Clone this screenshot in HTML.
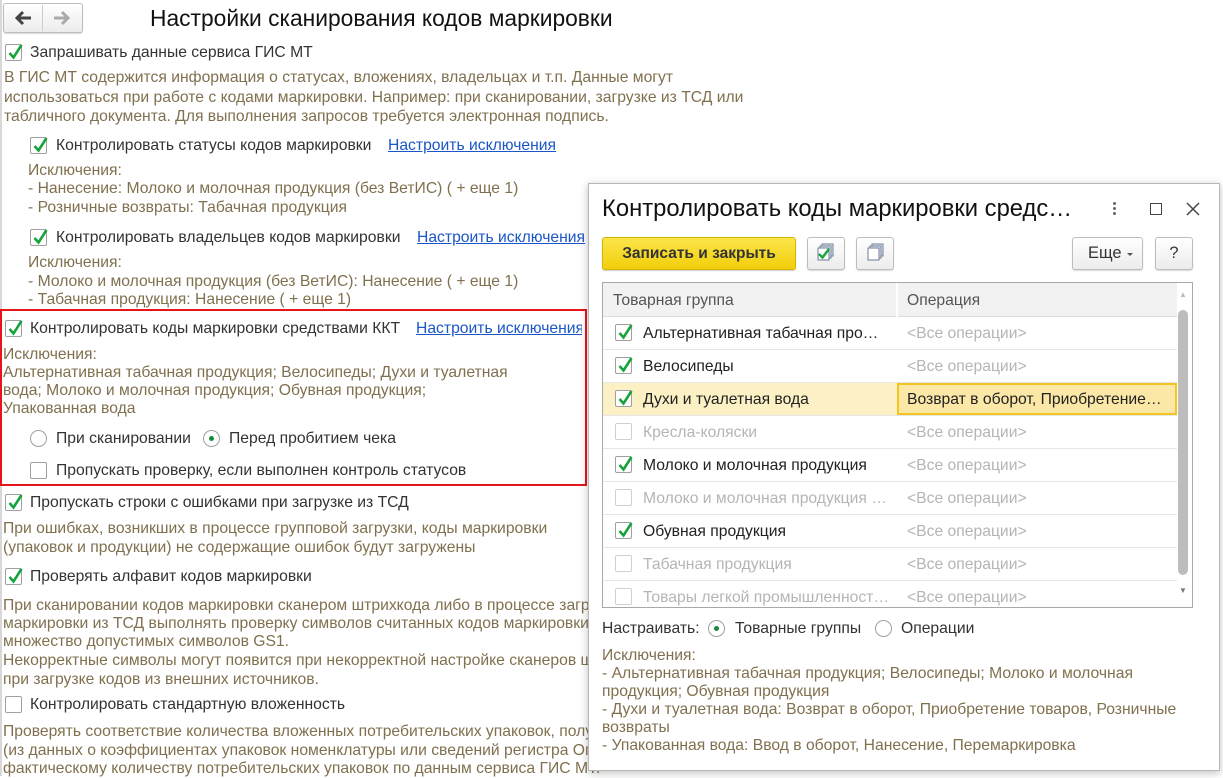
<!DOCTYPE html>
<html><head><meta charset="utf-8"><style>
*{margin:0;padding:0;box-sizing:border-box}
body{width:1223px;height:776px;background:#fff;font-family:"Liberation Sans",Arial,sans-serif;font-size:15.7px;color:#333;position:relative;overflow:hidden;letter-spacing:0}
.t{position:absolute;white-space:nowrap;line-height:19px}
.d{color:#80704f}
.a{color:#1a56c8;text-decoration:underline}
.cb{position:absolute;width:17px;height:17px;border:1px solid #a0a0a0;border-radius:2px;background:#fff}
.cb.g{border-color:#d0d0d0}
.cb svg{position:absolute;left:0;top:-3px}
.rb{position:absolute;width:17px;height:17px;border:1px solid #a0a0a0;border-radius:50%;background:#fff}
.rb.on::after{content:"";position:absolute;left:5px;top:5px;width:5px;height:5px;border-radius:50%;background:#1a8a3a}
.btn{position:absolute;border:1px solid #bdbdbd;border-radius:3px;background:linear-gradient(#fff,#ececec);box-shadow:0 1px 1px rgba(0,0,0,.15)}
</style></head><body>
<svg width="0" height="0" style="position:absolute"><defs><symbol id="ck" viewBox="0 0 18 20"><path d="M3.5 11 L7.5 15.5 L15.5 3" fill="none" stroke="#17a33c" stroke-width="2.6"/></symbol></defs></svg>

<div style="position:absolute;left:0;top:0;width:2px;height:776px;background:#d8d8d8"></div>
<!-- nav -->
<div class="btn" style="left:3px;top:3px;width:80px;height:30px"></div>
<div style="position:absolute;left:42px;top:5px;width:1px;height:26px;background:#ccc"></div>
<svg style="position:absolute;left:14px;top:10px" width="18" height="16" viewBox="0 0 18 16"><path d="M17 8 H4 M9 2 L3 8 L9 14" fill="none" stroke="#444" stroke-width="3"/></svg>
<svg style="position:absolute;left:53px;top:10px" width="18" height="16" viewBox="0 0 18 16"><path d="M1 8 H14 M9 2 L15 8 L9 14" fill="none" stroke="#aaa" stroke-width="3"/></svg>
<div class="t" style="left:150px;top:5px;font-size:22.8px;line-height:26px;color:#111">Настройки сканирования кодов маркировки</div>

<div class="cb" style="left:5px;top:44px"><svg width="18" height="20"><use href="#ck"/></svg></div>
<div class="t" style="left:30px;top:43px">Запрашивать данные сервиса ГИС МТ</div>
<div class="t d" style="left:4px;top:68px">В ГИС МТ содержится информация о статусах, вложениях, владельцах и т.п. Данные могут</div>
<div class="t d" style="left:4px;top:88px">использоваться при работе с кодами маркировки. Например: при сканировании, загрузке из ТСД или</div>
<div class="t d" style="left:4px;top:107px">табличного документа. Для выполнения запросов требуется электронная подпись.</div>

<div class="cb" style="left:30px;top:137px"><svg width="18" height="20"><use href="#ck"/></svg></div>
<div class="t" style="left:56px;top:136px">Контролировать статусы кодов маркировки</div>
<div class="t a" style="left:388px;top:136px">Настроить исключения</div>
<div class="t d" style="left:28px;top:161px">Исключения:</div>
<div class="t d" style="left:28px;top:179px">- Нанесение: Молоко и молочная продукция (без ВетИС) ( + еще 1)</div>
<div class="t d" style="left:28px;top:198px">- Розничные возвраты: Табачная продукция</div>

<div class="cb" style="left:30px;top:229px"><svg width="18" height="20"><use href="#ck"/></svg></div>
<div class="t" style="left:56px;top:228px">Контролировать владельцев кодов маркировки</div>
<div class="t a" style="left:417px;top:228px">Настроить исключения</div>
<div class="t d" style="left:28px;top:253px">Исключения:</div>
<div class="t d" style="left:28px;top:272px">- Молоко и молочная продукция (без ВетИС): Нанесение ( + еще 1)</div>
<div class="t d" style="left:28px;top:290px">- Табачная продукция: Нанесение ( + еще 1)</div>

<div style="position:absolute;left:0;top:309px;width:587px;height:177px;border:2px solid #e8141b"></div>
<div class="cb" style="left:5px;top:320px"><svg width="18" height="20"><use href="#ck"/></svg></div>
<div class="t" style="left:30px;top:319px">Контролировать коды маркировки средствами ККТ</div>
<div class="t a" style="left:416px;top:319px;width:166px;overflow:hidden">Настроить исключения</div>
<div class="t d" style="left:3px;top:345px">Исключения:</div>
<div class="t d" style="left:3px;top:363px">Альтернативная табачная продукция; Велосипеды; Духи и туалетная</div>
<div class="t d" style="left:3px;top:381px">вода; Молоко и молочная продукция; Обувная продукция;</div>
<div class="t d" style="left:3px;top:399px">Упакованная вода</div>
<div class="rb" style="left:30px;top:430px"></div>
<div class="t" style="left:56px;top:429px">При сканировании</div>
<div class="rb on" style="left:203px;top:430px"></div>
<div class="t" style="left:229px;top:429px">Перед пробитием чека</div>
<div class="cb" style="left:30px;top:462px"></div>
<div class="t" style="left:56px;top:461px">Пропускать проверку, если выполнен контроль статусов</div>

<div class="cb" style="left:5px;top:494px"><svg width="18" height="20"><use href="#ck"/></svg></div>
<div class="t" style="left:30px;top:493px">Пропускать строки с ошибками при загрузке из ТСД</div>
<div class="t d" style="left:3px;top:519px">При ошибках, возникших в процессе групповой загрузки, коды маркировки</div>
<div class="t d" style="left:3px;top:538px">(упаковок и продукции) не содержащие ошибок будут загружены</div>
<div class="cb" style="left:5px;top:568px"><svg width="18" height="20"><use href="#ck"/></svg></div>
<div class="t" style="left:30px;top:567px">Проверять алфавит кодов маркировки</div>
<div class="t d" style="left:3px;top:596px">При сканировании кодов маркировки сканером штрихкода либо в процессе загрузки кодов</div>
<div class="t d" style="left:3px;top:614px">маркировки из ТСД выполнять проверку символов считанных кодов маркировки на</div>
<div class="t d" style="left:3px;top:632px">множество допустимых символов GS1.</div>
<div class="t d" style="left:3px;top:651px">Некорректные символы могут появится при некорректной настройке сканеров штрихкода или</div>
<div class="t d" style="left:3px;top:670px">при загрузке кодов из внешних источников.</div>
<div class="cb" style="left:5px;top:696px"></div>
<div class="t" style="left:30px;top:695px">Контролировать стандартную вложенность</div>
<div class="t d" style="left:3px;top:722px">Проверять соответствие количества вложенных потребительских упаковок, полученных</div>
<div class="t d" style="left:3px;top:741px">(из данных о коэффициентах упаковок номенклатуры или сведений регистра Описание</div>
<div class="t d" style="left:3px;top:759px">фактическому количеству потребительских упаковок по данным сервиса ГИС МТ.</div>

<!-- dialog -->
<div style="position:absolute;left:588px;top:183px;width:632px;height:588px;background:#fff;border:1px solid #b8b8b8;box-shadow:0 2px 8px rgba(0,0,0,.25);overflow:hidden">
 <div class="t" style="left:13px;top:12px;font-size:23.8px;line-height:26px;color:#111">Контролировать коды маркировки средс…</div>
 <div style="position:absolute;left:524px;top:18px;width:3px;height:3px;background:#666;border-radius:50%;box-shadow:0 5px 0 #666,0 10px 0 #666"></div>
 <div style="position:absolute;left:561px;top:19px;width:12px;height:12px;border:1.5px solid #444"></div>
 <svg style="position:absolute;left:597px;top:18px" width="14" height="14" viewBox="0 0 14 14"><path d="M1 1 L13 13 M13 1 L1 13" stroke="#444" stroke-width="1.5"/></svg>

 <div style="position:absolute;left:13px;top:53px;width:194px;height:33px;border:1px solid #d6b400;border-radius:3px;background:linear-gradient(#fbe54a,#f2cf0a);box-shadow:0 1px 1px rgba(0,0,0,.2)"></div>
 <div class="t" style="left:13px;top:60px;width:194px;text-align:center;font-weight:bold;color:#333;font-size:15.5px">Записать и закрыть</div>
 <div class="btn" style="left:218px;top:53px;width:38px;height:33px"><svg width="36" height="31" viewBox="0 0 36 31"><rect x="14" y="6" width="11" height="12" fill="#e6ebf2" stroke="#6a7c95"/><rect x="12" y="8" width="11" height="12" fill="#e6ebf2" stroke="#6a7c95"/><rect x="10" y="10" width="11" height="12" fill="#fff" stroke="#6a7c95"/><path d="M11 16 L14.5 19.5 L21 11" fill="none" stroke="#1aa83a" stroke-width="2.5"/></svg></div>
 <div class="btn" style="left:267px;top:53px;width:38px;height:33px"><svg width="36" height="31" viewBox="0 0 36 31"><rect x="15" y="6" width="11" height="12" fill="#e6ebf2" stroke="#6a7c95"/><rect x="13" y="8" width="11" height="12" fill="#e6ebf2" stroke="#6a7c95"/><rect x="11" y="10" width="11" height="12" fill="#fff" stroke="#6a7c95"/></svg></div>
 <div class="btn" style="left:483px;top:53px;width:71px;height:33px"></div>
 <div class="t" style="left:499px;top:60px;color:#333;font-size:16.5px">Еще</div>
 <div style="position:absolute;left:538px;top:69px;border:3px solid transparent;border-top:3px solid #555"></div>
 <div class="btn" style="left:566px;top:53px;width:38px;height:33px"></div>
 <div class="t" style="left:566px;top:60px;width:38px;text-align:center;color:#333;font-size:16.5px">?</div>

 <div style="position:absolute;left:13px;top:98px;width:591px;height:326px;border:1px solid #a8a8a8;overflow:hidden">
  <div style="position:absolute;left:0;top:0;width:574px;height:34px;background:#f2f2f2;border-bottom:1px solid #ddd"></div>
  <div style="position:absolute;left:293px;top:0;width:2px;height:34px;background:#fff"></div>
  <div class="t" style="left:10px;top:8px;color:#555">Товарная группа</div>
  <div class="t" style="left:304px;top:8px;color:#555">Операция</div>
  <div style="position:absolute;left:575px;top:27px;width:10px;height:265px;background:#bdbdbd;border-radius:5px"></div>
  <div class="t" style="left:576px;top:2px;font-size:8px;color:#bbb">▲</div>
  <div class="t" style="left:576px;top:298px;font-size:8px;color:#777">▼</div>
  <div style="position:absolute;left:0;top:34px;width:574px">
   <div style="position:relative;height:33px;border-bottom:1px solid #e6e6e6"><div class="cb" style="left:12px;top:7px"><svg width="18" height="20"><use href="#ck"/></svg></div><div class="t" style="left:40px;top:7px;color:#222">Альтернативная табачная про…</div><div class="t" style="left:304px;top:7px;color:#b5b5b5">&lt;Все операции&gt;</div></div>
   <div style="position:relative;height:33px;border-bottom:1px solid #e6e6e6"><div class="cb" style="left:12px;top:7px"><svg width="18" height="20"><use href="#ck"/></svg></div><div class="t" style="left:40px;top:7px;color:#222">Велосипеды</div><div class="t" style="left:304px;top:7px;color:#b5b5b5">&lt;Все операции&gt;</div></div>
   <div style="position:relative;height:33px;border-bottom:1px solid #e6e6e6;background:#fcf1c5"><div class="cb" style="left:12px;top:7px"><svg width="18" height="20"><use href="#ck"/></svg></div><div class="t" style="left:40px;top:7px;color:#222">Духи и туалетная вода</div><div style="position:absolute;left:294px;top:0;width:280px;height:32px;border:2px solid #f3c521;background:#fbe8a6"></div><div class="t" style="left:304px;top:7px;color:#222;width:265px;overflow:hidden">Возврат в оборот, Приобретение…</div></div>
   <div style="position:relative;height:33px;border-bottom:1px solid #e6e6e6"><div class="cb g" style="left:12px;top:7px"></div><div class="t" style="left:40px;top:7px;color:#b5b5b5">Кресла-коляски</div><div class="t" style="left:304px;top:7px;color:#b5b5b5">&lt;Все операции&gt;</div></div>
   <div style="position:relative;height:33px;border-bottom:1px solid #e6e6e6"><div class="cb" style="left:12px;top:7px"><svg width="18" height="20"><use href="#ck"/></svg></div><div class="t" style="left:40px;top:7px;color:#222">Молоко и молочная продукция</div><div class="t" style="left:304px;top:7px;color:#b5b5b5">&lt;Все операции&gt;</div></div>
   <div style="position:relative;height:33px;border-bottom:1px solid #e6e6e6"><div class="cb g" style="left:12px;top:7px"></div><div class="t" style="left:40px;top:7px;color:#b5b5b5">Молоко и молочная продукция …</div><div class="t" style="left:304px;top:7px;color:#b5b5b5">&lt;Все операции&gt;</div></div>
   <div style="position:relative;height:33px;border-bottom:1px solid #e6e6e6"><div class="cb" style="left:12px;top:7px"><svg width="18" height="20"><use href="#ck"/></svg></div><div class="t" style="left:40px;top:7px;color:#222">Обувная продукция</div><div class="t" style="left:304px;top:7px;color:#b5b5b5">&lt;Все операции&gt;</div></div>
   <div style="position:relative;height:33px;border-bottom:1px solid #e6e6e6"><div class="cb g" style="left:12px;top:7px"></div><div class="t" style="left:40px;top:7px;color:#b5b5b5">Табачная продукция</div><div class="t" style="left:304px;top:7px;color:#b5b5b5">&lt;Все операции&gt;</div></div>
   <div style="position:relative;height:33px"><div class="cb g" style="left:12px;top:7px"></div><div class="t" style="left:40px;top:7px;color:#b5b5b5">Товары легкой промышленност…</div><div class="t" style="left:304px;top:7px;color:#b5b5b5">&lt;Все операции&gt;</div></div>
  </div>
 </div>

 <div class="t" style="left:13px;top:435px;color:#333">Настраивать:</div>
 <div class="rb on" style="left:119px;top:436px"></div>
 <div class="t" style="left:146px;top:435px;color:#333">Товарные группы</div>
 <div class="rb" style="left:286px;top:436px"></div>
 <div class="t" style="left:312px;top:435px;color:#333">Операции</div>
 <div class="t d" style="left:13px;top:462px">Исключения:</div>
 <div class="t d" style="left:13px;top:480px">- Альтернативная табачная продукция; Велосипеды; Молоко и молочная</div>
 <div class="t d" style="left:13px;top:498px">продукция; Обувная продукция</div>
 <div class="t d" style="left:13px;top:516px">- Духи и туалетная вода: Возврат в оборот, Приобретение товаров, Розничные</div>
 <div class="t d" style="left:13px;top:534px">возвраты</div>
 <div class="t d" style="left:13px;top:552px">- Упакованная вода: Ввод в оборот, Нанесение, Перемаркировка</div>
</div>
</body></html>
